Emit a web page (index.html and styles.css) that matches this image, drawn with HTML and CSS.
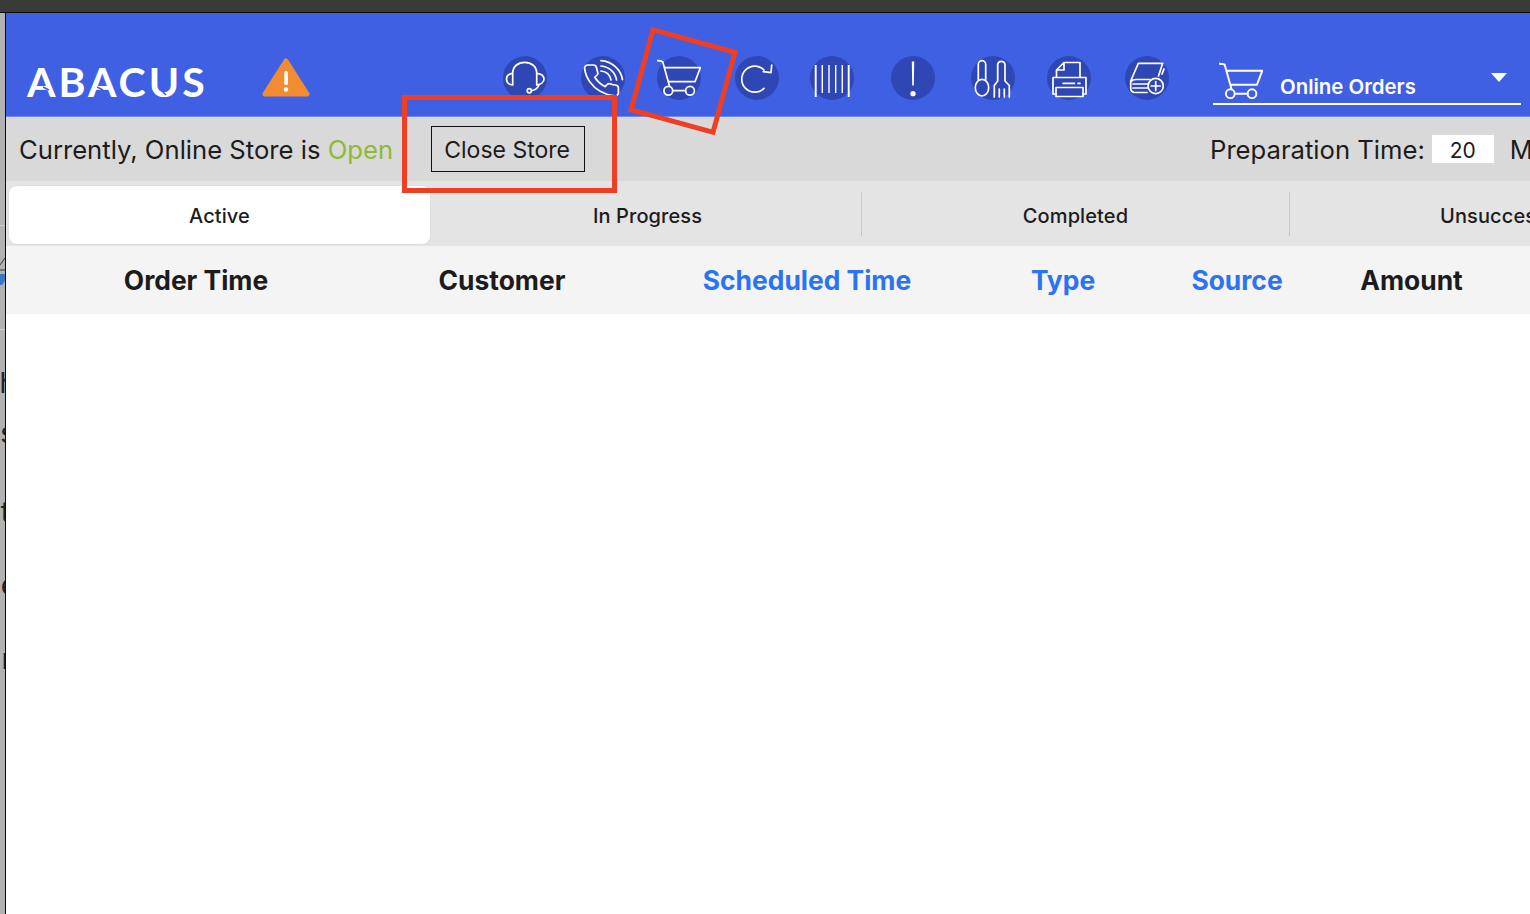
FILE: index.html
```html
<!DOCTYPE html>
<html lang="en">
<head>
<meta charset="utf-8">
<title>Abacus Online Orders</title>
<link rel="stylesheet" href="styles.css">
</head>
<body>
<svg class="defs" width="0" height="0" aria-hidden="true">
  <symbol id="cart" viewBox="0 0 44 44">
    <path d="M0 4.700c2 0 4.300.3 5.700 1L12.500 30M8 11.700H43.300L38 25.700H12"/>
    <path d="M15.800 34.700H28.600"/>
    <circle cx="11.300" cy="34.700" r="4.400"/>
    <circle cx="33" cy="34.700" r="4.400"/>
  </symbol>
</svg>
<div class="topbar"></div>
<div class="window">
  <aside class="edge">
    <span class="frag f-o">o</span>
    <span class="edge-rule"></span>
    <svg class="edge-mark" viewBox="0 0 5 28">
      <path class="edge-check" d="M0 8L5 1M0 13H5"/>
      <path class="edge-blue" d="M0 17H5V24L2 28H0Z"/>
    </svg>
    <span class="edge-rule r2"></span>
    <span class="frag f-h">h</span>
    <span class="frag f-s">s</span>
    <span class="frag f-t">t</span>
    <span class="frag f-e">e</span>
    <span class="frag f-r">r</span>
  </aside>
  <main class="app">
    <header class="header">
      <div class="logo">ABACUS
        <svg class="logo-cuts" viewBox="0 0 180 40">
          <path d="M16 26L22 29M70 26L76 29M87 11L92 14M135 30L139 34M170 15L176 12M153 27L158 24"/>
        </svg>
      </div>
      <svg class="warn" viewBox="0 0 48 40">
        <path class="warn-bg" d="M24 3 L45 36 H3 Z"/>
        <rect class="warn-mark" x="22.300" y="13" width="3.600" height="14" rx="1.500"/>
        <circle class="warn-mark" cx="24" cy="31.500" r="2.200"/>
      </svg>
      <nav class="tools">
        <div class="tool">
          <svg class="ico" viewBox="0 0 44 44">
            <path d="M9.700 29C5.500 28.500 3.500 26 3.500 23S5.500 17.800 9.700 17.300V29zM33.700 17.300C38 17.800 41 20 41 23S38 28.500 33.700 29V17.300zM9.700 17.300C9.700 10.500 15 6.300 21.700 6.300S33.700 10.500 33.700 17.300M36 29C35 32 32 34 28.700 34.700"/>
            <circle cx="26.300" cy="34.700" r="2.100"/>
          </svg>
        </div>
        <div class="tool">
          <svg class="ico" viewBox="0 0 44 44">
            <path transform="translate(0 5.900) scale(1.700 1.550)" class="thin" d="M22 16.920v3a2 2 0 0 1-2.180 2 19.790 19.790 0 0 1-8.630-3.070 19.500 19.500 0 0 1-6-6 19.790 19.790 0 0 1-3.070-8.670A2 2 0 0 1 4.110 2h3a2 2 0 0 1 2 1.720 12.840 12.840 0 0 0 .7 2.810 2 2 0 0 1-.45 2.110L8.090 9.910a16 16 0 0 0 6 6l1.270-1.270a2 2 0 0 1 2.110-.45 12.840 12.840 0 0 0 2.810.7A2 2 0 0 1 22 16.920z"/>
            <path d="M20 15c5.500 .5 9 4 10 9M20 10c8 .6 14.500 6.500 15.500 14M20 4.700c11 .7 20 9 21.500 19"/>
          </svg>
        </div>
        <div class="tool">
          <svg class="ico"><use href="#cart"/></svg>
        </div>
        <div class="tool">
          <svg class="ico" viewBox="0 0 44 44">
            <path d="M29 14A13 13 0 1 0 29 32.300M36.700 9L36 16.700L28.300 15.700"/>
          </svg>
        </div>
        <div class="tool">
          <svg class="ico" viewBox="0 0 44 44">
            <path class="bar-wide" d="M5.700 9V41M38.700 9V41"/>
            <path d="M12.300 9V37M19 9V37M25.700 9V37M32.300 9V37"/>
          </svg>
        </div>
        <div class="tool">
          <svg class="ico" viewBox="0 0 44 44">
            <path class="fill" d="M20.800 5.500H23.200L22.800 29.500H21.200Z"/>
            <circle class="fill" cx="22" cy="37.700" r="2.600"/>
          </svg>
        </div>
        <div class="tool">
          <svg class="ico" viewBox="0 0 44 44">
            <path d="M7.300 24V8.400a3.700 3.700 0 0 1 7.400 0V24"/>
            <ellipse cx="11" cy="31.700" rx="6.700" ry="8.300"/>
            <path d="M26.700 25V8.400a3.700 3.700 0 0 1 7.300 0V25l4.300 4.500V41M26.700 25l-3.400 4.500V41M28.300 33V41M33.300 33V41"/>
          </svg>
        </div>
        <div class="tool">
          <svg class="ico" viewBox="0 0 44 44">
            <path d="M9.500 21V14L17 6.500H33V21M17 6.500V14H9.500"/>
            <path d="M6 38V21.500H39V38H36M9 38H6"/>
            <rect x="9" y="31.500" width="27" height="9"/>
            <path d="M16 27.300H27.500M31 27.300H33"/>
          </svg>
        </div>
        <div class="tool">
          <svg class="ico" viewBox="0 0 44 44">
            <path d="M13.300 7.300H37.700L33.500 20M13.300 7.300L5.700 25V32A4 4 0 0 0 9.700 36.500H22M5.700 26C7 24 9 23.500 11 23.500H25M8 28H23M8 32H23M37 18L39 13"/>
            <circle cx="30.700" cy="30" r="7.600"/>
            <path d="M30.700 25.500V34.500M26.200 30H35.200"/>
          </svg>
        </div>
      </nav>
      <div class="picker">
        <svg class="picker-cart"><use href="#cart"/></svg>
        <span class="picker-label">Online Orders</span>
        <span class="picker-caret"></span>
      </div>
    </header>

    <section class="status">
      <div class="status-left">
        <span class="status-text">Currently, Online Store is <em class="open">Open</em></span>
        <button class="close-btn" type="button">Close Store</button>
      </div>
      <div class="status-right">
        <span class="status-text">Preparation Time:</span>
        <span class="prep-input">20</span>
        <span class="status-text">Minutes</span>
      </div>
    </section>

    <div class="tabs">
      <div class="tab active">Active</div>
      <div class="tab">In Progress</div>
      <div class="tab">Completed</div>
      <div class="tab">Unsuccessful</div>
    </div>

    <div class="thead">
      <div>Order Time</div>
      <div>Customer</div>
      <div class="sort">Scheduled Time</div>
      <div class="sort">Type</div>
      <div class="sort">Source</div>
      <div>Amount</div>
    </div>
    <div class="tbody"></div>
  </main>
</div>
<div class="callout callout-rect"></div>
<div class="callout callout-tilt"></div>
</body>
</html>
```
FILE: styles.css
```css
* { box-sizing: border-box; }
html, body { margin: 0; height: 100%; }
body {
  width: 1530px;
  height: 914px;
  overflow: hidden;
  position: relative;
  display: flex;
  flex-direction: column;
  background: #fff;
  font-family: Inter, "Liberation Sans", sans-serif;
  color: #1c1c1c;
}
.defs { position: absolute; }
.topbar {
  height: 13px;
  flex: none;
  background: #3a3a38;
  border-bottom: 1px solid #0c0c0c;
}
.window { flex: 1; display: flex; min-height: 0; }

.edge {
  width: 6px;
  flex: none;
  background: #b2b2b2;
  border-right: 1px solid #0a0a0a;
  overflow: hidden;
  display: flex;
  flex-direction: column;
  align-items: flex-end;
}
.frag {
  display: block;
  height: 30px;
  line-height: 30px;
  font-size: 28px;
  white-space: nowrap;
  color: #222;
  flex: none;
}
.f-o { margin-top: 123px; margin-right: 1px; transform: translateX(-16px); }
.edge-rule { display: block; width: 100%; height: 1px; background: #cfcfcf; margin-top: 59px; flex: none; }
.edge-mark { display: block; width: 5px; height: 28px; margin-top: 31px; flex: none; }
.edge-check { fill: none; stroke: #3a3a3a; stroke-width: 1px; }
.edge-blue { fill: #3b78c4; }
.edge-rule.r2 { margin-top: 44px; }
.f-h { margin-top: 38px; margin-right: -11px; }
.f-s { margin-top: 20px; margin-right: -10px; }
.f-t { margin-top: 49px; margin-right: -5px; }
.f-e { margin-top: 43px; margin-right: -12px; }
.f-r { margin-top: 44px; margin-right: -7px; }

.app { flex: 1; min-width: 0; display: flex; flex-direction: column; overflow: hidden; }

.header {
  height: 104px;
  flex: none;
  background: #4060e3;
  border-bottom: 1px solid #7088ea;
  display: flex;
  align-items: flex-start;
  padding-left: 21px;
}
.logo {
  position: relative;
  font-family: Lato, sans-serif;
  font-weight: 700;
  font-size: 41px;
  line-height: 42px;
  letter-spacing: 3px;
  color: #fff;
  margin-top: 48px;
  width: 235px;
  flex: none;
}
.logo-cuts {
  position: absolute;
  left: 0;
  top: 0;
  width: 180px;
  height: 40px;
  fill: none;
  stroke: #4060e3;
  stroke-width: 1.500px;
}
.warn { width: 48px; height: 40px; margin-top: 45px; flex: none; }
.warn-bg { fill: #f28c33; stroke: #f28c33; stroke-width: 5px; stroke-linejoin: round; }
.warn-mark { fill: #fff; }

.tools {
  display: grid;
  grid-template-columns: 78px 76px 78px 75px 81px 80px 76px 78px 44px;
  margin-left: 193px;
  margin-top: 43px;
  flex: none;
}
.tool {
  width: 44px;
  height: 44px;
  border-radius: 50%;
  background: #2f46b5;
}
.ico { display: block; width: 44px; height: 44px; overflow: visible; fill: none; stroke: #fff; stroke-width: 1.700px; stroke-linecap: round; stroke-linejoin: round; }
.ico path, .ico circle, .ico rect, .ico ellipse { fill: none; stroke: #fff; stroke-width: 1.700px; stroke-linecap: round; stroke-linejoin: round; }
.ico .thin { stroke-width: 1.050px; }
.ico .fill { fill: #fff; stroke: none; }
.ico .bar-wide { stroke-width: 2px; stroke-linecap: butt; }
.tool:nth-child(5) path { stroke-linecap: butt; stroke-width: 1.400px; }
.tool:nth-child(5) .bar-wide { stroke-width: 1.900px; }

.picker {
  position: relative;
  width: 308px;
  height: 46px;
  margin-left: 44px;
  margin-top: 46px;
  border-bottom: 2px solid #fff;
  display: flex;
  align-items: flex-end;
  flex: none;
  padding-left: 6px;
}
.picker-cart { width: 44px; height: 44px; flex: none; overflow: visible; fill: none; stroke: #fff; stroke-width: 1.900px; stroke-linecap: round; stroke-linejoin: round; }
.picker-label { color: #fff; font-weight: 600; font-size: 20.400px; line-height: 24px; margin-left: 17px; margin-bottom: 4px; }
.picker-caret {
  position: absolute;
  right: 14px;
  top: 14px;
  width: 0;
  height: 0;
  border-left: 8px solid transparent;
  border-right: 8px solid transparent;
  border-top: 9px solid #fff;
}

.status {
  height: 64px;
  flex: none;
  background: #d9d9d9;
  display: flex;
  align-items: center;
  justify-content: space-between;
  white-space: nowrap;
}
.status-left { display: flex; align-items: center; padding-left: 13px; }
.status-right { display: flex; align-items: center; flex: none; width: 320px; overflow: hidden; }
.status-text { font-size: 25.650px; line-height: 34px; flex: none; margin-top: 2px; }
.open { font-style: normal; color: #8fb935; }
.close-btn {
  margin-left: 38px;
  width: 154px;
  height: 46px;
  background: transparent;
  border: 1px solid #111;
  border-radius: 0;
  font: 400 23px/46px Inter, sans-serif;
  color: #1c1c1c;
  padding: 0 2px 0 0;
}
.prep-input {
  width: 62px;
  height: 28px;
  background: #fff;
  margin: 0 16px 0 7px;
  font-size: 21px;
  line-height: 32px;
  text-align: center;
  flex: none;
}

.tabs {
  height: 65px;
  flex: none;
  background: #e4e4e4;
  display: grid;
  grid-template-columns: 428px 428px 428px 432px;
  align-items: center;
  white-space: nowrap;
}
.tab {
  height: 44px;
  font-size: 20px;
  font-weight: 500;
  letter-spacing: .1px;
  line-height: 48px;
  text-align: center;
  border-right: 1px solid #c8c8c8;
}
.tab:nth-child(4) { border-right: 0; }
.tab.active {
  height: 60px;
  line-height: 60px;
  align-self: end;
  margin: 0 0 1px 2px;
  width: 423px;
  background: #fff;
  border: 1px solid #dedede;
  border-radius: 9px;
}

.thead {
  height: 68px;
  flex: none;
  background: #f4f4f4;
  display: grid;
  grid-template-columns: 380px 232px 378px 134px 214px 135px;
  align-items: center;
  font-size: 26.400px;
  font-weight: 700;
  line-height: 66px;
  text-align: center;
  white-space: nowrap;
}
.sort { color: #2b73f0; }
.tbody { flex: 1; background: #fff; }

.callout { position: absolute; border: 5px solid #ee3f24; }
.callout-rect { left: 402px; top: 95px; width: 215px; height: 98px; }
.callout-tilt {
  left: 638px;
  top: 37px;
  width: 90px;
  height: 88px;
  transform: rotate(15.300deg);
}
```
